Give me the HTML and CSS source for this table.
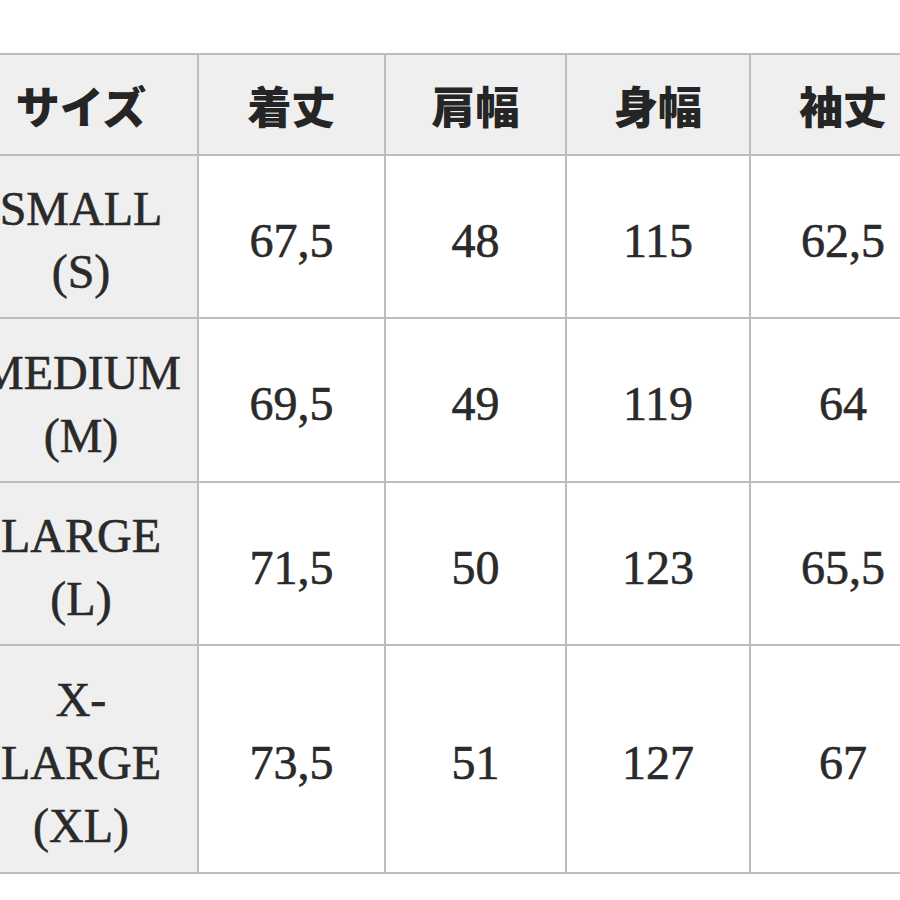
FILE: index.html
```html
<!DOCTYPE html>
<html lang="ja">
<head>
<meta charset="utf-8">
<title>サイズ表</title>
<link rel="stylesheet" href="styles.css">
</head>
<body>
<div class="page">
  <table class="size-table">
    <colgroup>
      <col class="c1"><col class="c2"><col class="c3"><col class="c4"><col class="c5">
    </colgroup>
    <thead>
      <tr class="head-row">
        <th>サイズ</th><th>着丈</th><th>肩幅</th><th>身幅</th><th>袖丈</th>
      </tr>
    </thead>
    <tbody>
      <tr class="row r1">
        <th class="size">SMALL<br>(S)</th><td>67,5</td><td>48</td><td>115</td><td>62,5</td>
      </tr>
      <tr class="row r2">
        <th class="size">MEDIUM<br>(M)</th><td>69,5</td><td>49</td><td>119</td><td>64</td>
      </tr>
      <tr class="row r3">
        <th class="size">LARGE<br>(L)</th><td>71,5</td><td>50</td><td>123</td><td>65,5</td>
      </tr>
      <tr class="row r4">
        <th class="size">X-<br>LARGE<br>(XL)</th><td>73,5</td><td>51</td><td>127</td><td>67</td>
      </tr>
    </tbody>
  </table>
</div>
</body>
</html>
```

FILE: styles.css
```css
html, body {
  margin: 0;
  padding: 0;
  background: #ffffff;
}

.page {
  width: 900px;
  height: 900px;
  overflow: hidden;
  padding-top: 53px;
  box-sizing: border-box;
}

.size-table {
  margin-left: -37px;
  border-collapse: separate;
  border-spacing: 2px;
  background: #bdbdbd;
  table-layout: fixed;
  width: 974px;
}

.c1 { width: 232px; }
.c2 { width: 185px; }
.c3 { width: 179px; }
.c4 { width: 182px; }
.c5 { width: 184px; }

.size-table th,
.size-table td {
  padding: 0;
  text-align: center;
  vertical-align: middle;
  color: #2a2a2a;
}

.head-row th {
  height: 99px;
  background: #efefef;
  font-family: "Noto Sans CJK JP", sans-serif;
  font-weight: 900;
  font-size: 44px;
  line-height: 1;
  color: #252525;
}

.row td,
.row th.size {
  font-family: "Liberation Serif", "Times New Roman", serif;
  font-weight: 400;
  font-size: 48px;
  line-height: 63px;
  padding-top: 7px;
  background: #ffffff;
  -webkit-text-stroke: 0.6px #2a2a2a;
}

.row th.size {
  background: #efefef;
}

.r1 td, .r1 th { height: 154px; }
.r2 td, .r2 th { height: 155px; }
.r3 td, .r3 th { height: 154px; }
.r4 td, .r4 th { height: 219px; }
```
